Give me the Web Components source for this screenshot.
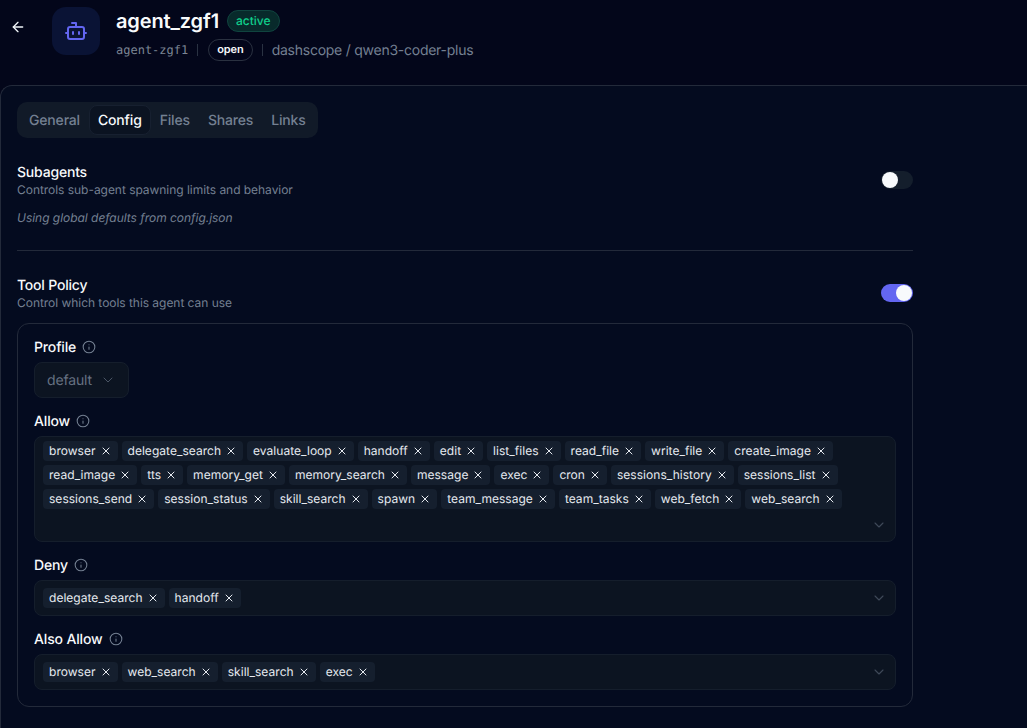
<!DOCTYPE html>
<html lang="en">
<head>
<meta charset="utf-8">
<title>agent_zgf1</title>
<style>
  html, body { margin: 0; height: 100%; background: #03061a; overflow: hidden; }
  body { font-family: Inter, "Liberation Sans", sans-serif; color: #f8fafc; text-rendering: geometricPrecision; }
</style>
</head>
<body>
<agent-page></agent-page>

<script>
const ICONS = {
  back: '<path d="M12 19l-7-7 7-7"/><path d="M19 12H5"/>',
  bot: '<path d="M12 8V4H8"/><rect x="4" y="8" width="16" height="12" rx="2"/><path d="M2 14h2"/><path d="M20 14h2"/><path d="M15 13v2"/><path d="M9 13v2"/>',
  x: '<path d="M18 6L6 18"/><path d="M6 6l12 12"/>',
  chevron: '<path d="M6 9l6 6 6-6"/>',
  info: '<circle cx="12" cy="12" r="10"/><path d="M12 16v-4"/><path d="M12 8h.01"/>',
};

function icon(name, size, stroke) {
  return `<svg xmlns="http://www.w3.org/2000/svg" width="${size}" height="${size}" viewBox="0 0 24 24" fill="none" stroke="currentColor" stroke-width="${stroke}" stroke-linecap="round" stroke-linejoin="round" style="display:block;flex:none">${ICONS[name]}</svg>`;
}

class AgentHeader extends HTMLElement {
  connectedCallback() {
    this.attachShadow({ mode: "open" });
    this.shadowRoot.innerHTML = `
      <style>
        :host { display: flex; height: 85px; box-sizing: border-box; padding-top: 7px; }
        .back { width: 36px; height: 40px; margin-right: 16px; display: flex; align-items: center; justify-content: center; color: #f1f5f9; }
        .avatar { width: 48px; height: 48px; border-radius: 14px; background: #0a1335; color: #6366f1; display: flex; align-items: center; justify-content: center; margin-right: 16px; }
        .title { display: flex; align-items: center; gap: 8px; height: 28px; }
        h1 { margin: 0; font-size: 20px; line-height: 28px; font-weight: 600; letter-spacing: -0.12px; }
        .active { height: 20px; line-height: 20px; padding: 0 8px; border: 1px solid #10443f; background: #082a2b; color: #10cf8b; border-radius: 11px; font-size: 12px; font-weight: 500; }
        .meta { display: flex; align-items: center; height: 22px; margin-top: 4px; color: #748092; }
        .id { font: 12px "DejaVu Sans Mono", "Liberation Mono", monospace; color: #7b8594; }
        .sep { width: 1px; height: 12px; background: #2a3242; margin: 0 9px; }
        .open { height: 20px; margin-left: 1px; line-height: 19px; padding: 0 8px; border: 1px solid #2a3140; border-radius: 11px; font-size: 11px; font-weight: 600; letter-spacing: -0.1px; color: #f8fafc; }
        .model { padding-top: 2px; font-size: 14px; line-height: 20px; letter-spacing: -0.25px; color: #748092; }
      </style>
      <div class="back">${icon("back", 16, 2)}</div>
      <div class="avatar">${icon("bot", 24, 2)}</div>
      <div>
        <div class="title"><h1>agent_zgf1</h1><span class="active">active</span></div>
        <div class="meta">
          <span class="id">agent-zgf1</span><span class="sep"></span>
          <span class="open">open</span><span class="sep"></span>
          <span class="model">dashscope / qwen3-coder-plus</span>
        </div>
      </div>`;
  }
}

class TabBar extends HTMLElement {
  connectedCallback() {
    const active = this.getAttribute("active");
    const tabs = this.getAttribute("tabs").split(",");
    this.attachShadow({ mode: "open" });
    this.shadowRoot.innerHTML = `
      <style>
        :host { display: inline-flex; height: 36px; box-sizing: border-box; padding: 3px; background: #111a28; border-radius: 10px; }
        span { display: flex; align-items: center; height: 30px; box-sizing: border-box; padding: 0 8px; font-size: 14px; font-weight: 500; letter-spacing: -0.17px; color: #748092; border: 1px solid transparent; border-radius: 8px; }
        .on { color: #f8fafc; background: #0b1321; border-color: #172030; }
      </style>
      ${tabs.map((t) => `<span class="${t === active ? "on" : ""}">${t}</span>`).join("")}`;
  }
}

class ToggleSwitch extends HTMLElement {
  connectedCallback() {
    this.attachShadow({ mode: "open" });
    this.shadowRoot.innerHTML = `
      <style>
        :host { display: flex; width: 32px; height: 18px; box-sizing: border-box; padding: 1px; border-radius: 9px; background: #141e2c; }
        :host([on]) { background: #6366f1; justify-content: flex-end; }
        i { display: block; width: 16px; height: 16px; border-radius: 50%; background: #f8fafc; }
      </style>
      <i></i>`;
  }
}

class SectionHead extends HTMLElement {
  connectedCallback() {
    this.attachShadow({ mode: "open" });
    this.shadowRoot.innerHTML = `
      <style>
        :host { display: flex; align-items: center; justify-content: space-between; }
        .t { padding-top: 2px; font-size: 14px; line-height: 18px; font-weight: 500; letter-spacing: -0.2px; color: #f8fafc; }
        .d { font-size: 12px; line-height: 16px; letter-spacing: -0.04px; color: #748092; }
      </style>
      <div>
        <div class="t">${this.getAttribute("title")}</div>
        <div class="d">${this.getAttribute("desc")}</div>
      </div>
      <slot></slot>`;
  }
}

class FieldLabel extends HTMLElement {
  connectedCallback() {
    this.attachShadow({ mode: "open" });
    this.shadowRoot.innerHTML = `
      <style>
        :host { display: flex; align-items: center; gap: 6px; height: 19px; font-size: 14px; font-weight: 500; letter-spacing: -0.15px; color: #f8fafc; }
        slot { display: block; padding-top: 2px; line-height: 17px; }
        span { color: #748092; }
      </style>
      <slot></slot><span>${icon("info", 14, 1.8)}</span>`;
  }
}

class TagChip extends HTMLElement {
  connectedCallback() {
    this.attachShadow({ mode: "open" });
    this.shadowRoot.innerHTML = `
      <style>
        :host { display: flex; align-items: center; gap: 4px; height: 20px; padding: 0 6px; border-radius: 4px; background: #151f2e; font-size: 12px; letter-spacing: 0.03px; color: #e6eaf0; white-space: nowrap; }
        slot { display: block; padding-bottom: 1px; line-height: 16px; }
      </style>
      <slot></slot>${icon("x", 12, 2)}`;
  }
}

class TagBox extends HTMLElement {
  connectedCallback() {
    const tags = this.getAttribute("tags").split(",");
    this.attachShadow({ mode: "open" });
    this.shadowRoot.innerHTML = `
      <style>
        :host { display: flex; flex-wrap: wrap; align-items: center; align-content: center; gap: 4px; box-sizing: border-box; min-height: 36px; padding: 4px 8px; border: 1px solid #151e2c; border-radius: 8px; background: #0c1421; }
        .end { flex: 1; min-width: 60px; height: 24px; display: flex; align-items: center; justify-content: flex-end; color: #3f4959; }
      </style>
      ${tags.map((t) => `<tag-chip>${t}</tag-chip>`).join("")}
      <div class="end">${icon("chevron", 16, 1.6)}</div>`;
  }
}

class SelectBox extends HTMLElement {
  connectedCallback() {
    this.attachShadow({ mode: "open" });
    this.shadowRoot.innerHTML = `
      <style>
        :host { display: inline-flex; align-items: center; gap: 8px; height: 36px; box-sizing: border-box; padding: 0 12px; border: 1px solid #151e2c; border-radius: 8px; background: #0c1421; font-size: 14px; letter-spacing: -0.15px; color: #667182; }
        span { color: #4a5565; }
      </style>
      <slot></slot><span>${icon("chevron", 16, 1.5)}</span>`;
  }
}

class AgentPage extends HTMLElement {
  connectedCallback() {
    this.attachShadow({ mode: "open" });
    this.shadowRoot.innerHTML = `
      <style>
        :host { display: block; }
        .panel { box-sizing: border-box; height: 643px; padding: 16px 114px 0 16px; border: 1px solid #232a3a; border-right: 0; border-bottom: 0; border-top-left-radius: 12px; background: #040b1f; }
        tab-bar { margin-bottom: 24px; vertical-align: top; }
        .note { margin: 12px 0 0; font-size: 12px; line-height: 16px; font-style: italic; letter-spacing: -0.03px; color: #748092; }
        hr { border: 0; border-top: 1px solid #232a3a; margin: 24px 0; }
        .policy { margin-top: 12px; box-sizing: border-box; height: 384px; padding: 13px 16px 0; border: 1px solid #232a3a; border-radius: 12px; display: flex; flex-direction: column; align-items: stretch; }
        field-label { margin-bottom: 6px; }
        .gap { margin-top: 13px; }
        select-box { align-self: flex-start; }
      </style>
      <agent-header></agent-header>
      <div class="panel">
        <tab-bar tabs="General,Config,Files,Shares,Links" active="Config"></tab-bar>
        <section-head title="Subagents" desc="Controls sub-agent spawning limits and behavior"><toggle-switch></toggle-switch></section-head>
        <p class="note">Using global defaults from config.json</p>
        <hr>
        <section-head title="Tool Policy" desc="Control which tools this agent can use"><toggle-switch on></toggle-switch></section-head>
        <div class="policy">
          <field-label>Profile</field-label>
          <select-box>default</select-box>
          <field-label class="gap">Allow</field-label>
          <tag-box tags="browser,delegate_search,evaluate_loop,handoff,edit,list_files,read_file,write_file,create_image,read_image,tts,memory_get,memory_search,message,exec,cron,sessions_history,sessions_list,sessions_send,session_status,skill_search,spawn,team_message,team_tasks,web_fetch,web_search"></tag-box>
          <field-label class="gap">Deny</field-label>
          <tag-box tags="delegate_search,handoff"></tag-box>
          <field-label class="gap">Also Allow</field-label>
          <tag-box tags="browser,web_search,skill_search,exec"></tag-box>
        </div>
      </div>`;
  }
}

// children first so the page markup upgrades straight away
customElements.define("tag-chip", TagChip);
customElements.define("tag-box", TagBox);
customElements.define("select-box", SelectBox);
customElements.define("field-label", FieldLabel);
customElements.define("toggle-switch", ToggleSwitch);
customElements.define("section-head", SectionHead);
customElements.define("tab-bar", TabBar);
customElements.define("agent-header", AgentHeader);
customElements.define("agent-page", AgentPage);
</script>
</body>
</html>
